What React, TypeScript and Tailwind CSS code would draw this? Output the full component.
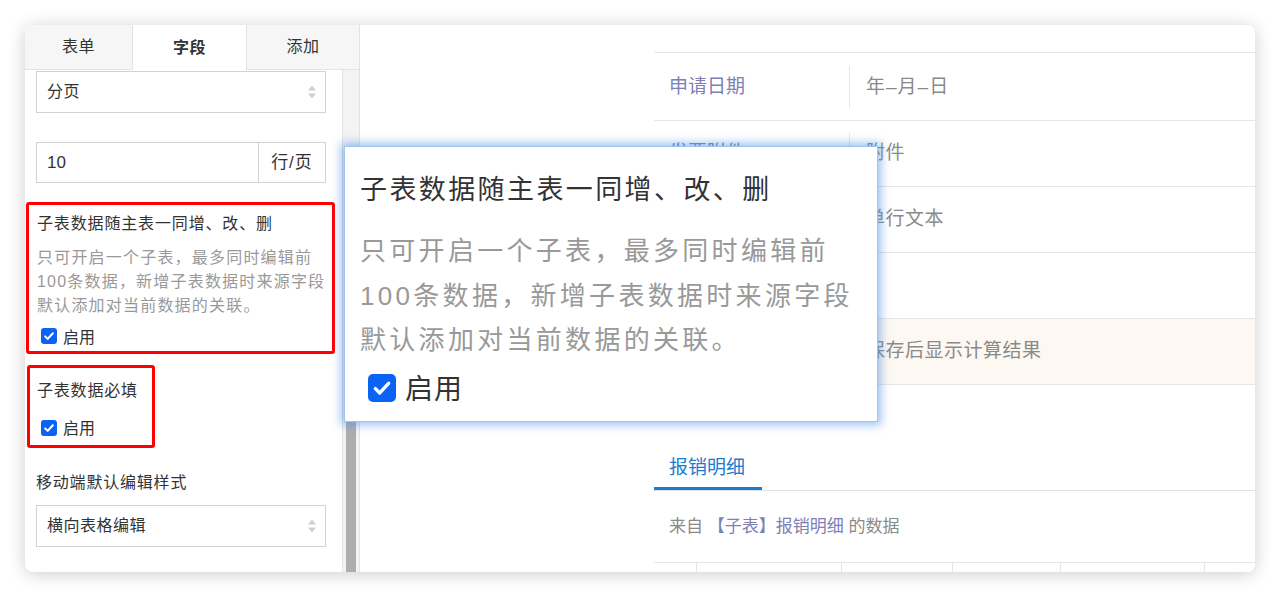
import React from 'react';

function Checkbox({ big }: { big?: boolean }) {
  return (
    <span
      className={
        big
          ? 'flex h-[28px] w-[28px] items-center justify-center rounded-[5px] bg-[#0b63f6]'
          : 'flex h-[16px] w-[16px] items-center justify-center rounded-[3px] bg-[#0b63f6]'
      }
    >
      <svg viewBox="0 0 16 16" className={big ? 'h-[24px] w-[24px]' : 'h-[14px] w-[14px]'}>
        <path d="M3.6 8.4l2.9 2.9 5.9-6.4" stroke="#fff" strokeWidth="2.3" fill="none" strokeLinecap="round" strokeLinejoin="round" />
      </svg>
    </span>
  );
}

function SelectArrows() {
  return (
    <svg viewBox="0 0 10 16" className="h-[16px] w-[10px]">
      <path d="M5 1.5L9 6.5H1z" fill="#cfcfcf" />
      <path d="M5 14.5L9 9.5H1z" fill="#cfcfcf" />
    </svg>
  );
}

function FormRow({ label, value, tint }: { label?: string; value: string; tint?: boolean }) {
  return (
    <div className={tint ? 'flex h-[66px] items-center border-b border-[#e6e6e6] bg-[#fdf8f2]' : 'flex h-[66px] items-center border-b border-[#e6e6e6]'}>
      <div className="flex h-[42px] w-[196px] items-center border-r border-[#e6e6e6] pl-[15px] text-[19px] text-[#7c80b5]">
        {label}
      </div>
      <div className="pl-[16px] text-[19px] tracking-[0.5px] text-[#8a8a8a]">{value}</div>
    </div>
  );
}

export default function App() {
  return (
    <div className="h-[597px] bg-white p-[25px] font-['Liberation_Sans','Noto_Sans_CJK_SC',sans-serif]">
      <div className="relative flex h-[547px] w-[1230px] overflow-hidden rounded-[8px] bg-white shadow-[0_2px_18px_rgba(0,0,0,0.2)]">
        {/* 左侧属性面板 */}
        <div className="flex w-[335px] flex-col border-r border-[#e3e3e3]">
          <div className="flex h-[45px] text-[16px] text-[#333]">
            <div className="flex w-[108px] items-center justify-center border-b border-r border-[#e3e3e3] bg-[#f6f6f6] tracking-[0.5px]">表单</div>
            <div className="flex w-[114px] items-center justify-center border-r border-[#e3e3e3] bg-white font-bold tracking-[0.5px]">字段</div>
            <div className="flex flex-1 items-center justify-center border-b border-[#e3e3e3] bg-[#f6f6f6] tracking-[0.5px]">添加</div>
          </div>
          <div className="flex flex-1">
            <div className="w-[317px] pl-[11px] pr-[16px] text-[16px] text-[#333]">
              <div className="mt-[1px] flex h-[42px] items-center justify-between border border-[#d2d2d2] pl-[10px] pr-[8px]">
                <span className="tracking-[0.5px]">分页</span>
                <SelectArrows />
              </div>
              <div className="mt-[29px] flex h-[41px] border border-[#d2d2d2] text-[17px]">
                <div className="flex flex-1 items-center pl-[10px]">10</div>
                <div className="flex w-[67px] items-center justify-center border-l border-[#d2d2d2] tracking-[1px]">行/页</div>
              </div>

              <div className="-ml-[10px] mt-[19px] w-[309px] rounded-[3px] border-[3px] border-[#ff0000] pb-[4px] pl-[8px] pt-[7px]">
                <div className="whitespace-nowrap leading-[24px] tracking-[0.85px]">子表数据随主表一同增、改、删</div>
                <div className="mt-[10px] whitespace-nowrap leading-[24px] tracking-[1.2px] text-[#999]">
                  <div>只可开启一个子表，最多同时编辑前</div>
                  <div>100条数据，新增子表数据时来源字段</div>
                  <div>默认添加对当前数据的关联。</div>
                </div>
                <div className="mt-[7px] flex h-[22px] items-center gap-[6px] pl-[4px]">
                  <Checkbox />
                  <span className="mt-[3px]">启用</span>
                </div>
              </div>

              <div className="-ml-[9px] mt-[11px] w-[128px] rounded-[3px] border-[3px] border-[#ff0000] pb-[7px] pl-[7px] pt-[11px]">
                <div className="whitespace-nowrap leading-[24px] tracking-[0.8px]">子表数据必填</div>
                <div className="mt-[15px] flex h-[20px] items-center gap-[6px] pl-[4px]">
                  <Checkbox />
                  <span className="mt-[2px]">启用</span>
                </div>
              </div>

              <div className="mt-[23px] leading-[24px] tracking-[0.8px]">移动端默认编辑样式</div>
              <div className="mt-[10px] flex h-[42px] items-center justify-between border border-[#d2d2d2] pl-[10px] pr-[8px]">
                <span className="tracking-[0.5px]">横向表格编辑</span>
                <SelectArrows />
              </div>
            </div>
            {/* 滚动条 */}
            <div className="w-[17px] border-l border-[#e3e3e3] bg-[#f3f3f3] pl-[3px] pt-[330px]">
              <div className="h-full w-[10px] bg-[#adadad]" />
            </div>
          </div>
        </div>

        {/* 右侧表单预览 */}
        <div className="flex-1 bg-white pl-[294px] pt-[27px]">
          <div className="border-t border-[#e6e6e6]">
            <div className="flex h-[68px] items-center border-b border-[#e6e6e6]">
              <div className="flex h-[42px] w-[196px] items-center border-r border-[#e6e6e6] pl-[15px] pt-[2px] text-[19px] text-[#7c80b5]">申请日期</div>
              <div className="pl-[16px] pt-[2px] text-[19px] tracking-[1px] text-[#8a8a8a]">年–月–日</div>
            </div>
            <FormRow label="发票附件" value="附件" />
            <FormRow value="单行文本" />
            <FormRow value="" />
            <FormRow value="保存后显示计算结果" tint />
          </div>

          <div className="mt-[69px] flex border-b border-[#e0e0e0]">
            <div className="w-[108px] border-b-[3px] border-[#1a7bd1] pb-[5px] pl-[15px] text-[19px] leading-[28px] text-[#1a7bd1]">报销明细</div>
          </div>

          <div className="mt-[24px] pl-[15px] text-[17px] leading-[24px] text-[#8a8a8a]">
            来自 <span className="text-[#7c80b5]">【子表】报销明细</span> 的数据
          </div>

          <div className="mt-[23px] flex h-[20px] border-t border-[#e6e6e6]">
            <div className="w-[43px] border-r border-[#e6e6e6]" />
            <div className="w-[145px] border-r border-[#e6e6e6]" />
            <div className="w-[111px] border-r border-[#e6e6e6]" />
            <div className="w-[108px] border-r border-[#e6e6e6]" />
            <div className="w-[144px] border-r border-[#e6e6e6]" />
            <div className="flex-1" />
          </div>
        </div>

        {/* 放大提示 */}
        <div className="absolute left-[319px] top-[121px] h-[276px] w-[534px] border border-[#9fc4f0] bg-white pl-[15px] pt-[23px] shadow-[0_0_9px_3px_rgba(74,144,226,0.55)]">
          <div className="whitespace-nowrap text-[27px] leading-[40px] tracking-[2.4px] text-[#333]">子表数据随主表一同增、改、删</div>
          <div className="mt-[19px] whitespace-nowrap text-[26px] leading-[44.5px] tracking-[3.3px] text-[#999]">
            <div>只可开启一个子表，最多同时编辑前</div>
            <div>100条数据，新增子表数据时来源字段</div>
            <div>默认添加对当前数据的关联。</div>
          </div>
          <div className="mt-[10px] flex h-[30px] items-center gap-[9px] pl-[8px]">
            <Checkbox big />
            <span className="mt-[4px] text-[28px] tracking-[1px] text-[#333]">启用</span>
          </div>
        </div>
      </div>
    </div>
  );
}
